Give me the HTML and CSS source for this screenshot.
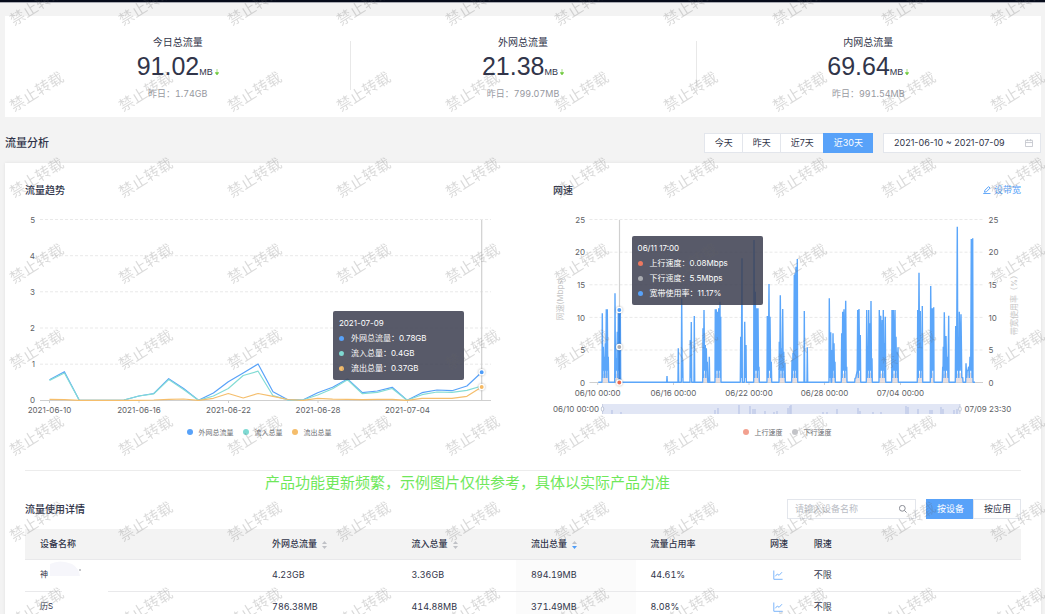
FILE: index.html
```html
<!DOCTYPE html>
<html lang="zh-CN">
<head>
<meta charset="utf-8">
<title>流量分析</title>
<link rel="stylesheet" href="styles.css">
</head>
<body>
<div class="page">
  <header class="topbar"></header>
  <main class="content">
    <section class="stats">
      <div class="stat">
        <div class="stat-label">今日总流量</div>
        <div class="stat-value">91.02<span class="unit">MB</span><svg class="down" viewBox="0 0 4 6"><path d="M2 0v4M2 6L.2 3.6h3.6z"/></svg></div>
        <div class="stat-prev">昨日：1.74GB</div>
      </div>
      <div class="stat">
        <div class="stat-label">外网总流量</div>
        <div class="stat-value">21.38<span class="unit">MB</span><svg class="down" viewBox="0 0 4 6"><path d="M2 0v4M2 6L.2 3.6h3.6z"/></svg></div>
        <div class="stat-prev">昨日：799.07MB</div>
      </div>
      <div class="stat">
        <div class="stat-label">内网总流量</div>
        <div class="stat-value">69.64<span class="unit">MB</span><svg class="down" viewBox="0 0 4 6"><path d="M2 0v4M2 6L.2 3.6h3.6z"/></svg></div>
        <div class="stat-prev">昨日：991.54MB</div>
      </div>
    </section>

    <div class="section-head">
      <h1>流量分析</h1>
      <div class="filters">
        <div class="btn-group">
          <button type="button">今天</button>
          <button type="button">昨天</button>
          <button type="button">近7天</button>
          <button type="button" class="active">近30天</button>
        </div>
        <div class="date-box">
          <input type="text" aria-label="日期范围" value="2021-06-10 ~ 2021-07-09">
          <svg class="cal" viewBox="0 0 9 9"><path d="M.5 1.5h8v7h-8zM.5 4h8M2.7 0v2.4M6.3 0v2.4"/></svg>
        </div>
      </div>
    </div>

    <section class="panel">
      <div class="charts">
        <div class="chart">
          <div class="chart-head"><h2>流量趋势</h2></div>
          <div class="plot">
            <svg class="canvas" viewBox="25 205 468 213">
              <g class="grid"><path d="M40 219.5H491M40 255.7H491M40 291.8H491M40 328H491M40 364.2H491"/></g>
              <g class="axis"><path d="M40 400.5H491M49.5 400v3M139 400v3M228.5 400v3M318 400v3M407.5 400v3"/></g>
              <g class="tick end">
                <text x="35" y="222.5">5</text><text x="35" y="258.5">4</text><text x="35" y="294.5">3</text><text x="35" y="331">2</text><text x="35" y="367">1</text><text x="35" y="403">0</text>
              </g>
              <g class="tick mid">
                <text x="49.5" y="413">2021-06-10</text><text x="139" y="413">2021-06-16</text><text x="228.5" y="413">2021-06-22</text><text x="318" y="413">2021-06-28</text><text x="407.5" y="413">2021-07-04</text>
              </g>
              <path class="pointer" d="M481.7 220V400"/>
              <polyline class="line blue" points="49.5,379.7 64.4,371.7 79.3,400.3 94.2,400.3 109.1,400.3 124,400 138.9,396 153.8,393.5 168.7,378.7 183.6,388.5 198.5,400.3 213.4,393 228.3,381.7 243.2,373 258.1,364 273,391.7 287.9,399.7 302.8,400 317.7,392.7 332.6,387.3 347.5,379 362.4,392.7 377.3,391 392.2,387.3 407.1,400.3 422,392.7 437,390 452,390.7 466.9,386 481.7,372.3"/>
              <polyline class="line teal" points="49.5,380.4 64.4,373 79.3,400.3 94.2,400.3 109.1,400.3 124,400 138.9,396 153.8,393.8 168.7,379.6 183.6,389.5 198.5,400.3 213.4,396 228.3,388.5 243.2,375.5 258.1,371.2 273,395.7 287.9,400 302.8,400 317.7,395 332.6,388.7 347.5,379.8 362.4,393.7 377.3,392.3 392.2,388.5 407.1,400.3 422,394.7 437,392 452,392.3 466.9,390.3 481.7,386"/>
              <polyline class="line orange" points="49.5,399.3 64.4,399.6 79.3,400.3 94.2,400.3 109.1,400.3 124,400.3 138.9,400.3 153.8,400 168.7,399.3 183.6,399 198.5,400.3 213.4,398.3 228.3,393.5 243.2,398 258.1,393.5 273,396.3 287.9,399.5 302.8,400.3 317.7,398.3 332.6,399.2 347.5,399.4 362.4,399.6 377.3,399.3 392.2,399.3 407.1,400.3 422,398.3 437,398.3 452,398.3 466.9,396.3 481.7,387"/>
              <circle class="dot blue" cx="481.7" cy="372.3" r="2.6"/>
              <circle class="dot orange" cx="481.7" cy="387" r="2.6"/>
            </svg>
            <div class="tooltip tip-traffic">
              <div>2021-07-09</div>
              <div><i class="bullet blue"></i>外网总流量：0.78GB</div>
              <div><i class="bullet teal"></i>流入总量：0.4GB</div>
              <div><i class="bullet orange"></i>流出总量：0.37GB</div>
            </div>
          </div>
          <div class="legend">
            <span><i class="bullet blue"></i>外网总流量</span>
            <span><i class="bullet teal"></i>流入总量</span>
            <span><i class="bullet orange"></i>流出总量</span>
          </div>
        </div>

        <div class="chart">
          <div class="chart-head">
            <h2>网速</h2>
            <a href="#"><svg class="pen" viewBox="0 0 8 8"><path d="M.2 7.6h7.3M1.5 6.2l.4-1.9L5.6.6l1.5 1.5-3.7 3.7z"/></svg>设带宽</a>
          </div>
          <div class="plot">
            <svg class="canvas" viewBox="553 205 468 213">
              <g class="grid"><path d="M589.5 219.5H983M589.5 252.2H983M589.5 284.8H983M589.5 317.4H983M589.5 350H983"/></g>
              <g class="axis"><path d="M589.5 382.5H983M597.7 383v2M673.5 383v2M749 383v2M824.5 383v2M900.5 383v2"/></g>
              <g class="tick end">
                <text x="585" y="222.5">25</text><text x="585" y="255">20</text><text x="585" y="287.5">15</text><text x="585" y="320.5">10</text><text x="585" y="353">5</text><text x="585" y="385.5">0</text>
              </g>
              <g class="tick">
                <text x="988.5" y="222.5">25</text><text x="988.5" y="255">20</text><text x="988.5" y="287.5">15</text><text x="988.5" y="320.5">10</text><text x="988.5" y="353">5</text><text x="988.5" y="385.5">0</text>
              </g>
              <g class="tick mid">
                <text x="597.7" y="395.5">06/10 00:00</text><text x="673.5" y="395.5">06/16 00:00</text><text x="749" y="395.5">06/22 00:00</text><text x="824.5" y="395.5">06/28 00:00</text><text x="900.5" y="395.5">07/04 00:00</text>
              </g>
              <g class="axis-name">
                <text transform="translate(563 299) rotate(-90)">网速(Mbps)</text>
                <text transform="translate(1017 303) rotate(-90)">带宽使用率（%）</text>
              </g>
              <path class="pointer" d="M619.5 220V383"/>
              <path id="usage-base" class="usage-base"/>
              <path id="usage" class="usage"/>
              <path class="current" d="M619.4 312V382"/>
              <circle class="dot blue" cx="619.3" cy="310" r="2.6"/>
              <circle class="dot gray" cx="619.3" cy="347" r="2.6"/>
              <circle class="dot red" cx="619.3" cy="382.5" r="2.6"/>
              <rect class="range" x="602.5" y="404" width="357.5" height="10"/>
              <path class="range-data" d="M612 414v-4M621 414v-2M715 414v-4M718 414v-6M739 414v-9M750 414v-8M753 414v-5M755 414v-5M765 414v-3M774 414v-2M777 414v-3M788 414v-6M790 414v-8M791 414v-9M823 414v-2M827 414v-2M837 414v-5M858 414v-6M860 414v-3M873 414v-2M881 414v-2M906 414v-8M908 414v-7M918 414v-5M930 414v-4M932 414v-4M941 414v-7M943 414v-5M954 414v-4M957 414v-5"/>
              <path class="handle" d="M602.5 404V414M960 404V414"/>
              <rect class="knob" x="601.3" y="407" width="2.4" height="4" rx="1"/>
              <rect class="knob" x="958.8" y="407" width="2.4" height="4" rx="1"/>
              <g class="tick"><text class="end" x="599" y="412">06/10 00:00</text><text x="964.5" y="412">07/09 23:30</text></g>
            </svg>
            <div class="tooltip tip-speed">
              <div>06/11 17:00</div>
              <div><i class="bullet red"></i>上行速度：0.08Mbps</div>
              <div><i class="bullet gray"></i>下行速度：5.5Mbps</div>
              <div><i class="bullet blue"></i>宽带使用率：11.17%</div>
            </div>
          </div>
          <div class="legend">
            <span><i class="bullet red faded"></i>上行速度</span>
            <span><i class="bullet gray faded"></i>下行速度</span>
          </div>
        </div>
      </div>

      <div class="detail">
        <p class="notice">产品功能更新频繁，示例图片仅供参考，具体以实际产品为准</p>
        <div class="detail-head">
          <h2>流量使用详情</h2>
          <div class="filters">
            <div class="search">
              <input type="text" aria-label="设备名称" placeholder="请输入设备名称">
              <svg class="magnifier" viewBox="0 0 8 8"><path d="M5.4 5.4L7.6 7.6M6.2 3.3a2.9 2.9 0 1 1-5.8 0a2.9 2.9 0 1 1 5.8 0"/></svg>
            </div>
            <div class="btn-group">
              <button type="button" class="active">按设备</button>
              <button type="button">按应用</button>
            </div>
          </div>
        </div>
        <table class="devices">
          <colgroup><col class="c-name"><col class="c-wan"><col class="c-num"><col class="c-num"><col class="c-num"><col class="c-speed"><col></colgroup>
          <thead>
            <tr>
              <th>设备名称</th>
              <th>外网总流量<svg class="sort" viewBox="0 0 5 8"><path d="M2.5 0L5 3H0z"/><path d="M2.5 8L0 5h5z"/></svg></th>
              <th>流入总量<svg class="sort" viewBox="0 0 5 8"><path d="M2.5 0L5 3H0z"/><path d="M2.5 8L0 5h5z"/></svg></th>
              <th>流出总量<svg class="sort" viewBox="0 0 5 8"><path d="M2.5 0L5 3H0z"/><path class="on" d="M2.5 8L0 5h5z"/></svg></th>
              <th>流量占用率</th>
              <th>网速</th>
              <th>限速</th>
            </tr>
          </thead>
          <tbody>
            <tr>
              <td class="name">神<svg class="smudge" viewBox="0 0 60 34"><path class="violet" d="M2 3Q12-2 24 3Q31 7 32 15H2z"/><path class="white" d="M14 17h46v17H14z"/><path class="ink" d="M31 9h2"/></svg></td>
              <td>4.23GB</td><td>3.36GB</td><td class="sorted">894.19MB</td><td>44.61%</td>
              <td><a href="#" class="trend" aria-label="网速"><svg viewBox="0 0 10 10"><path d="M.8.5v8.8h8.8M2.3 6.3l2-2.3 1.8 1.3L9 2.2"/></svg></a></td>
              <td>不限</td>
            </tr>
            <tr>
              <td class="name">历S</td>
              <td>786.38MB</td><td>414.88MB</td><td class="sorted">371.49MB</td><td>8.08%</td>
              <td><a href="#" class="trend" aria-label="网速"><svg viewBox="0 0 10 10"><path d="M.8.5v8.8h8.8M2.3 6.3l2-2.3 1.8 1.3L9 2.2"/></svg></a></td>
              <td>不限</td>
            </tr>
          </tbody>
        </table>
      </div>
    </section>
  </main>
  <svg class="watermark" aria-hidden="true">
    <defs>
      <pattern id="mark" x="0" y="-25" width="109" height="86" patternUnits="userSpaceOnUse">
        <text transform="translate(14 51) rotate(-32)">禁止转载</text>
      </pattern>
    </defs>
    <rect width="100%" height="100%" fill="url(#mark)"/>
  </svg>
</div>
<script src="script.js"></script>
</body>
</html>
```

FILE: styles.css
```css
* { box-sizing: border-box; }
html { scrollbar-width: none; }
body {
  margin: 0;
  background: #f3f3f3;
  color: #31354a;
  font-family: Inter, "Noto Sans CJK SC", sans-serif;
  font-size: 9px;
  line-height: 14px;
}
.page { position: relative; overflow: hidden; }
.topbar { height: 3px; background: #060b1a; border-bottom: 1px solid #a9abb3; }
.content { padding: 13px 4px 0 5px; }
h1, h2 { margin: 0; font-weight: 500; }
h1 { font-size: 11px; }
h2 { font-size: 10px; }
a { color: #58a2f9; text-decoration: none; }
i { font-style: normal; }
svg { fill: none; }

.stats { display: flex; background: #fff; padding: 18px 0 11px; }
.stat { flex: 1; position: relative; text-align: center; }
.stat + .stat::before { content: ""; position: absolute; left: 0; top: 7px; height: 49px; width: 1px; background: #e8e8e8; }
.stat-label { font-size: 10px; line-height: 16px; }
.stat-value { font-family: "Liberation Sans", sans-serif; font-size: 25px; line-height: 32px; }
.unit { font-size: 9px; line-height: 1; }
.down { width: 4px; height: 6px; margin-left: 2px; fill: #6fc93c; stroke: #6fc93c; stroke-width: .6; }
.stat-prev { color: #97999f; font-variant-numeric: tabular-nums; line-height: 24px; }

.section-head { display: flex; justify-content: space-between; align-items: center; padding: 16px 0 10px; }
.filters { display: flex; gap: 10px; }
.btn-group { display: flex; }
button, input { font: inherit; color: inherit; }
button { height: 20px; padding: 0 9px 0 10px; border: 1px solid #e3e6ec; background: #fff; line-height: 18px; white-space: nowrap; }
button + button { margin-left: -1px; }
button.active { background: #58a2f9; border-color: #58a2f9; color: #fff; }
.date-box, .search { display: flex; align-items: center; height: 20px; border: 1px solid #e3e6ec; background: #fff; }
.date-box { width: 158px; padding: 0 7px 0 10px; }
.search { width: 129px; padding: 0 8px 0 7px; }
input { flex: 1; min-width: 0; border: 0; padding: 0; background: none; outline: 0; }
input::placeholder { color: #b9bcc4; opacity: 1; }
.cal { width: 8px; height: 8px; stroke: #c3c6cc; }
.magnifier { width: 8px; height: 8px; stroke: #8b8e96; }

.panel { background: #fff; padding: 20px 20px 0; box-shadow: 0 0 3px rgba(0, 0, 0, .08); }
.charts { display: grid; grid-template-columns: 1fr 1fr; gap: 60px; padding-bottom: 31px; }
.chart { min-width: 0; }
.chart-head { display: flex; justify-content: space-between; margin-bottom: 8px; }
.pen { width: 8px; height: 8px; margin-right: 3px; stroke: #58a2f9; vertical-align: -1px; }
.plot { position: relative; }
.canvas { display: block; width: 100%; }
.grid path { stroke: #e9e9e9; stroke-dasharray: 3 2; }
.axis path { stroke: #cfcfcf; }
.tick text { fill: #606266; font-size: 8px; }
.tick.end text, .tick text.end { text-anchor: end; }
.tick.mid text, .axis-name text { text-anchor: middle; }
.axis-name text { fill: #c6c6c6; font-size: 8px; }
.pointer { stroke: #d0d0d0; stroke-width: 1.2; }
.line { stroke-width: 1.2; stroke-linejoin: round; }
.line.blue { stroke: #58a2f9; }
.line.teal { stroke: #84dcd5; }
.line.orange { stroke: #f5be6c; }
.dot { stroke: #fff; stroke-width: 1.3; filter: drop-shadow(0 0 1px rgba(0, 0, 0, .3)); }
.dot.blue { fill: #4d9cf8; }
.dot.orange { fill: #f5b963; }
.dot.gray { fill: #a9abb0; }
.dot.red { fill: #ec6a50; }
.usage { stroke: #5ba6fa; stroke-width: 1.4; stroke-linejoin: bevel; }
.usage-base { fill: #e9dfe0; }
.current { stroke: #3f88df; stroke-width: 2; }
.range { fill: #e1e6f5; }
.range-data { stroke: #c3cdea; stroke-width: 1.6; }
.handle { stroke: #b9c2da; stroke-width: .7; }
.knob { fill: #fff; stroke: #a7b1c8; stroke-width: .7; }
.tooltip {
  position: absolute;
  width: 131px;
  padding: 5px 6px 4px;
  border-radius: 2px;
  background: rgba(60, 63, 80, .86);
  color: #fff;
  font-size: 8px;
  line-height: 15px;
  white-space: nowrap;
}
.tip-traffic { left: 65.8%; top: 106px; }
.tip-speed { left: 16.8%; top: 31px; }
.bullet { display: inline-block; width: 6px; height: 6px; margin-right: 6px; border-radius: 50%; }
.tooltip .bullet { width: 5px; height: 5px; margin-right: 7px; }
.bullet.blue { background: #58a2f9; }
.bullet.teal { background: #7fdad3; }
.bullet.orange { background: #f5bd6b; }
.bullet.red { background: #ec7860; }
.bullet.gray { background: #a9abb0; }
.bullet.faded { opacity: .7; }
.legend { display: flex; justify-content: center; gap: 9px; margin-top: 9px; color: #6b6d72; font-size: 7px; line-height: 12px; }

.detail { position: relative; border-top: 1px solid #ececec; padding-top: 28px; }
.notice { position: absolute; top: 1px; left: 240px; margin: 0; color: #6fe85a; font-size: 15px; line-height: 22px; white-space: nowrap; }
.detail-head { display: flex; justify-content: space-between; align-items: center; margin-bottom: 10px; }
.devices { width: 100%; table-layout: fixed; border-collapse: collapse; font-variant-numeric: tabular-nums; }
.c-name { width: 23.3%; }
.c-wan { width: 14%; }
.c-num { width: 12%; }
.c-speed { width: 4.4%; }
th, td { padding: 0 0 0 15px; border-bottom: 1px solid #e9e9eb; text-align: left; white-space: nowrap; }
th { height: 30px; background: #f3f3f3; font-weight: 500; }
td { height: 32px; }
.sorted { background: #fbfbfb; }
.sort { width: 5px; height: 8px; margin-left: 5px; fill: #bfc1c6; vertical-align: -2px; }
.sort .on { fill: #4d9cf8; }
.name { position: relative; padding-bottom: 3px; font-size: 8px; }
.smudge { position: absolute; left: 23px; top: 1px; width: 60px; height: 34px; }
.smudge .violet { fill: #f6f6fb; }
.smudge .white { fill: #fff; }
.smudge .ink { stroke: #8b8e96; }
.trend { display: block; width: 10px; height: 10px; margin-left: 3px; }
.trend svg { display: block; stroke: #7cb6fb; }

.watermark { position: absolute; inset: 0; width: 100%; height: 100%; pointer-events: none; }
.watermark text { fill: rgba(95, 95, 95, .23); font-family: "Noto Sans CJK SC", sans-serif; font-size: 15px; }
```

FILE: script.js
```js
const ORIGIN = { x: 540, y: 170 };
const FLOOR = 637;
const bursts = [
  [[187, 430], [190, 530], [193, 560], [196, 520], [199, 418], [202, 418], [205, 560]],
  [[225, 370], [228, 565], [232, 485], [235, 430], [238, 420], [241, 425]],
  [[381, 618]],
  [[415, 535]],
  [[425, 385], [428, 570]],
  [[451, 510], [454, 456]],
  [[463, 438]],
  [[489, 475], [492, 420], [496, 525], [499, 535], [502, 575]],
  [[508, 560]],
  [[526, 418], [529, 418], [533, 425], [536, 415], [540, 395], [542, 440]],
  [[602, 500], [606, 265]],
  [[614, 455], [618, 525]],
  [[642, 210], [646, 365], [650, 415], [654, 415], [657, 590]],
  [[682, 438], [687, 342], [690, 440], [694, 575]],
  [[718, 515], [721, 376], [725, 535], [728, 417], [731, 545], [735, 578]],
  [[756, 570], [759, 548], [763, 315], [765, 310], [768, 290], [772, 267]],
  [[793, 423]],
  [[802, 532]],
  [[868, 385], [872, 487]],
  [[876, 540], [879, 490], [882, 520], [885, 575]],
  [[905, 490], [908, 425], [912, 418], [917, 392], [920, 590]],
  [[945, 625], [950, 610], [953, 420], [957, 417], [961, 495]],
  [[980, 420], [983, 530], [986, 420], [990, 460], [993, 393], [996, 565]],
  [[1018, 420], [1022, 437], [1027, 450], [1030, 420], [1033, 520], [1036, 440]],
  [[1056, 420], [1060, 420], [1065, 420], [1068, 500], [1071, 545], [1074, 532]],
  [[1133, 420], [1137, 308], [1141, 423], [1144, 530], [1147, 408]],
  [[1172, 348], [1177, 415], [1181, 412]],
  [[1208, 590], [1210, 530], [1213, 427], [1218, 498], [1222, 560], [1226, 437]],
  [[1247, 468], [1252, 170], [1255, 530], [1258, 425], [1263, 433], [1268, 622]],
  [[1278, 580], [1282, 600], [1286, 590], [1290, 560], [1294, 207], [1298, 205]]
];

const at = (x, y) => `${(ORIGIN.x + x / 3).toFixed(1)} ${(ORIGIN.y + y / 3).toFixed(1)}`;
let line = `M${at(175, FLOOR)}`;
let base = "";

bursts.forEach((burst) => {
  const first = burst[0][0];
  const last = burst[burst.length - 1][0];
  line += `L${at(first - 1, FLOOR)}`;
  burst.forEach(([x, y], i) => {
    line += `L${at(x, y)}`;
    if (i < burst.length - 1) {
      const dip = i % 2 ? 602 : 624;
      line += `L${at((x + burst[i + 1][0]) / 2, dip)}`;
    }
  });
  line += `L${at(last + 1, FLOOR)}`;
  if (burst.length > 2) {
    base += `M${at(first, FLOOR)}L${at(first + 2, 612)}L${at(last - 2, 608)}L${at(last + 1, FLOOR)}Z`;
  }
});
line += `L${at(1305, FLOOR)}`;

document.getElementById("usage").setAttribute("d", line);
document.getElementById("usage-base").setAttribute("d", base);
```
